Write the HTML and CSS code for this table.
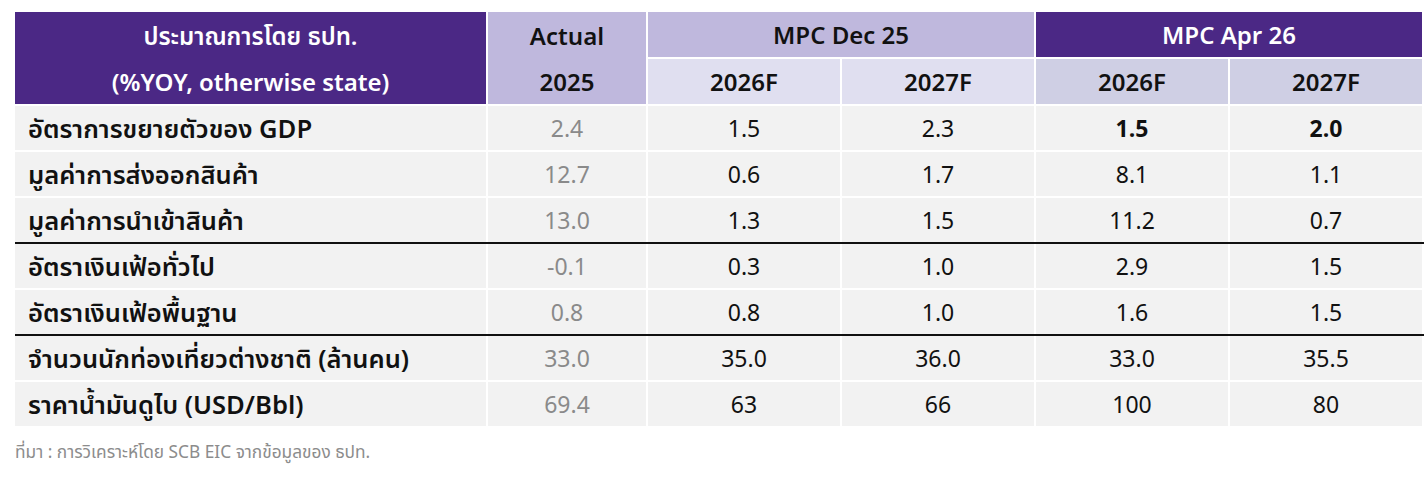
FILE: index.html
```html
<!DOCTYPE html>
<html lang="th">
<head>
<meta charset="utf-8">
<title>ประมาณการโดย ธปท.</title>
<link rel="stylesheet" href="styles.css">
</head>
<body>
<main class="page">
  <table class="fc">
    <colgroup>
      <col class="c-label">
      <col class="c-num">
      <col class="c-f">
      <col class="c-f">
      <col class="c-f">
      <col class="c-f">
    </colgroup>
    <thead>
      <tr>
        <th rowspan="2" class="h-dark h-label"><div class="hl">ประมาณการโดย ธปท.</div><div class="hl">(%YOY, otherwise state)</div></th>
        <th rowspan="2" class="h-lav h-actual"><div class="hl">Actual</div><div class="hl">2025</div></th>
        <th colspan="2" class="h-lav">MPC Dec 25</th>
        <th colspan="2" class="h-dark">MPC Apr 26</th>
      </tr>
      <tr>
        <th class="h-pale">2026F</th>
        <th class="h-pale">2027F</th>
        <th class="h-mid">2026F</th>
        <th class="h-mid">2027F</th>
      </tr>
    </thead>
    <tbody>
      <tr>
        <td class="lab">อัตราการขยายตัวของ GDP</td>
        <td class="act">2.4</td><td>1.5</td><td>2.3</td><td class="b">1.5</td><td class="b">2.0</td>
      </tr>
      <tr>
        <td class="lab">มูลค่าการส่งออกสินค้า</td>
        <td class="act">12.7</td><td>0.6</td><td>1.7</td><td>8.1</td><td>1.1</td>
      </tr>
      <tr class="brk">
        <td class="lab">มูลค่าการนำเข้าสินค้า</td>
        <td class="act">13.0</td><td>1.3</td><td>1.5</td><td>11.2</td><td>0.7</td>
      </tr>
      <tr>
        <td class="lab">อัตราเงินเฟ้อทั่วไป</td>
        <td class="act">-0.1</td><td>0.3</td><td>1.0</td><td>2.9</td><td>1.5</td>
      </tr>
      <tr class="brk">
        <td class="lab">อัตราเงินเฟ้อพื้นฐาน</td>
        <td class="act">0.8</td><td>0.8</td><td>1.0</td><td>1.6</td><td>1.5</td>
      </tr>
      <tr>
        <td class="lab">จำนวนนักท่องเที่ยวต่างชาติ (ล้านคน)</td>
        <td class="act">33.0</td><td>35.0</td><td>36.0</td><td>33.0</td><td>35.5</td>
      </tr>
      <tr>
        <td class="lab">ราคาน้ำมันดูไบ (USD/Bbl)</td>
        <td class="act">69.4</td><td>63</td><td>66</td><td>100</td><td>80</td>
      </tr>
    </tbody>
  </table>
  <p class="source">ที่มา : การวิเคราะห์โดย SCB EIC จากข้อมูลของ ธปท.</p>
</main>
</body>
</html>
```
FILE: styles.css
```css
html, body {
  margin: 0;
  padding: 0;
  background: #ffffff;
}
.page {
  padding: 12px 0 0 15px;
  font-family: "Noto Sans Thai", "Noto Sans", "Liberation Sans", sans-serif;
  color: #111111;
}
.fc {
  width: 1407px;
  table-layout: fixed;
  border-collapse: collapse;
}
.c-label { width: 472px; }
.c-num { width: 160px; }
.c-f { width: 194px; }
.fc th, .fc td {
  border: 2px solid #ffffff;
  padding: 4px 0 0 0;
  height: 46px;
  box-sizing: border-box;
  text-align: center;
  vertical-align: middle;
  font-size: 23px;
  line-height: 40px;
}
.fc th {
  font-size: 24px;
  font-weight: 600;
  color: #111111;
  padding-top: 5px;
}
.fc th.h-label, .fc th.h-actual {
  padding-top: 0;
}
.fc .hl {
  height: 46px;
  line-height: 46px;
  padding-top: 3px;
  box-sizing: border-box;
}
.fc thead tr:first-child th { border-top: 0; }
.fc th:first-child, .fc td:first-child { border-left: 0; }
.h-dark { background: #4b2885; color: #ffffff !important; }
.h-lav { background: #bfb8dd; }
.h-pale { background: #e0dff0; }
.h-mid { background: #cfcfe4; }
.fc td {
  background: #f2f2f2;
  font-weight: 400;
}
.fc td.lab {
  text-align: left;
  padding-left: 13px;
  font-size: 25.5px;
  font-weight: 600;
}
.fc td.act { color: #8a8a8a; }
.fc td.b { font-weight: 700; }
.fc tr.brk td { border-bottom: 2px solid #111111; }
.source {
  margin: 12px 0 0 0;
  font-size: 17.3px;
  color: #8c8c8c;
}
```
